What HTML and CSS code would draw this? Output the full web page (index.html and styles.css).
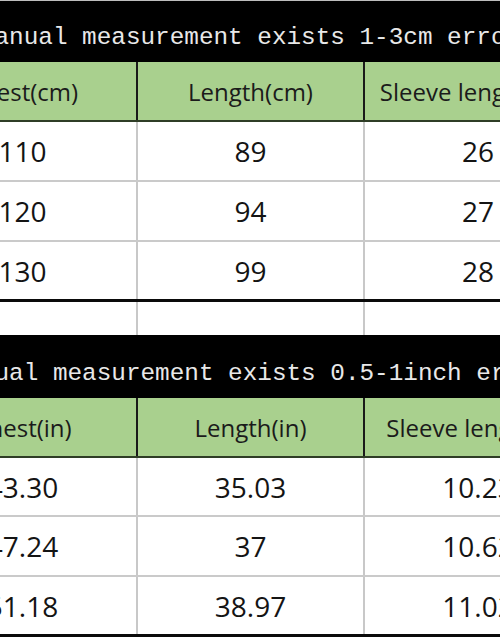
FILE: index.html
```html
<!DOCTYPE html>
<html>
<head>
<meta charset="utf-8">
<link rel="stylesheet" href="styles.css">
</head>
<body>
<div class="sheet">
  <div class="title"><span>Manual measurement exists 1-3cm error</span></div>
  <div class="row head">
    <div class="cell">Chest(cm)</div>
    <div class="cell">Length(cm)</div>
    <div class="cell">Sleeve length(cm)</div>
  </div>
  <div class="row data">
    <div class="cell">110</div>
    <div class="cell">89</div>
    <div class="cell">26</div>
  </div>
  <div class="row data">
    <div class="cell">120</div>
    <div class="cell">94</div>
    <div class="cell">27</div>
  </div>
  <div class="row data last">
    <div class="cell">130</div>
    <div class="cell">99</div>
    <div class="cell">28</div>
  </div>
  <div class="row spacer">
    <div class="cell"></div>
    <div class="cell"></div>
    <div class="cell"></div>
  </div>
  <div class="title title2"><span>Manual measurement exists 0.5-1inch error</span></div>
  <div class="row head">
    <div class="cell">Chest(in)</div>
    <div class="cell">Length(in)</div>
    <div class="cell">Sleeve length(in)</div>
  </div>
  <div class="row data short">
    <div class="cell">43.30</div>
    <div class="cell">35.03</div>
    <div class="cell">10.23</div>
  </div>
  <div class="row data">
    <div class="cell">47.24</div>
    <div class="cell">37</div>
    <div class="cell">10.62</div>
  </div>
  <div class="row data last">
    <div class="cell">51.18</div>
    <div class="cell">38.97</div>
    <div class="cell">11.02</div>
  </div>
</div>
</body>
</html>
```
FILE: styles.css
```css
html, body {
  margin: 0;
  padding: 0;
  background: #ffffff;
  overflow: hidden;
}
body {
  width: 500px;
  height: 641px;
}
.sheet {
  margin-left: -91px;
  width: 682px;
  border-top: 1px solid #bdbdbd;
  font-family: "Open Sans", "Noto Sans", sans-serif;
  color: #141414;
}
.title {
  height: 61px;
  background: #000000;
  display: flex;
  justify-content: center;
  align-items: flex-start;
  white-space: nowrap;
  overflow: visible;
}
.title span {
  font-family: "Liberation Mono", "DejaVu Sans Mono", monospace;
  font-size: 24.33px;
  color: #e8e8e8;
  line-height: 1;
  margin-top: 25px;
}
.title2 {
  height: 63px;
}
.title2 span {
  margin-top: 27px;
}
.row {
  display: grid;
  grid-template-columns: 227px 227px 228px;
  box-sizing: border-box;
  height: 60px;
}
.cell {
  box-sizing: border-box;
  display: flex;
  align-items: center;
  justify-content: center;
  white-space: nowrap;
}
.cell + .cell {
  border-left: 2px solid #c8c8c8;
}
.head {
  background: #a9d08e;
  border-bottom: 2px solid #2f3d26;
  font-size: 24px;
  color: #1b1b1b;
}
.head .cell + .cell {
  border-left: 2px solid #1a1a1a;
}
.data {
  border-bottom: 2px solid #cacaca;
  font-size: 28px;
}
.data.short {
  height: 59px;
}
.data.last {
  border-bottom: 3px solid #0a0a0a;
  height: 60px;
}
.spacer {
  height: 33px;
}
```
